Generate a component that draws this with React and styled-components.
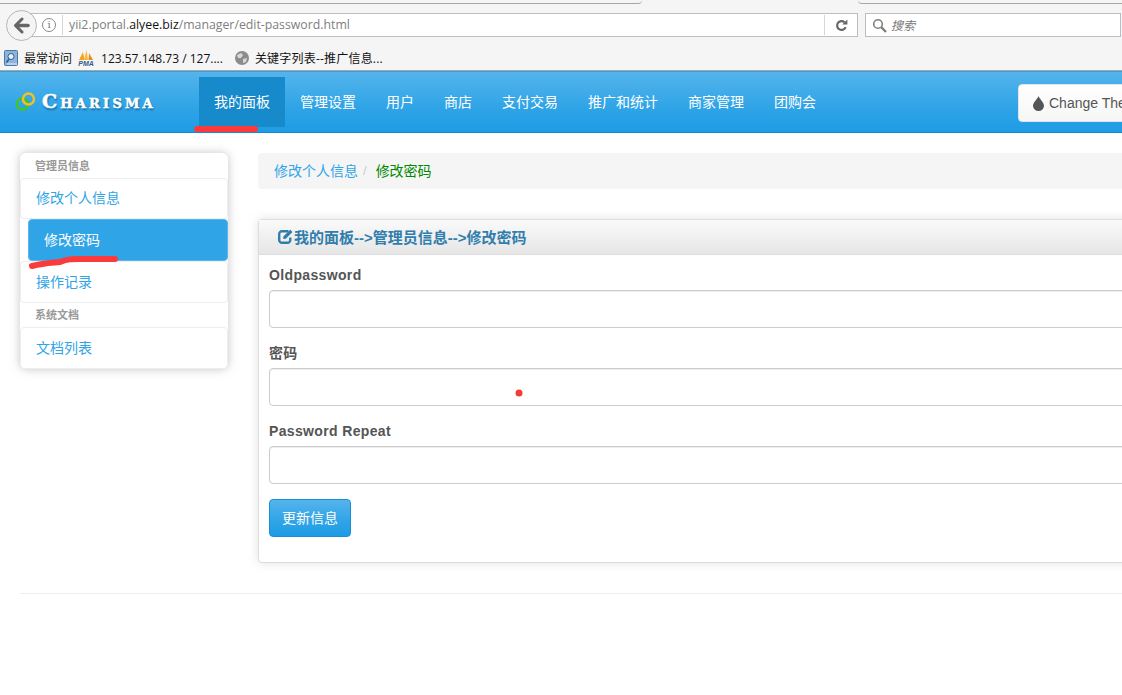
import React from "react";
import styled, { createGlobalStyle } from "styled-components";

const CJK = `"Liberation Sans", "Noto Sans CJK SC", sans-serif`;

const Global = createGlobalStyle`
  html, body { margin: 0; padding: 0; background: #fff; overflow: hidden; }
  body { font-family: ${CJK}; font-size: 14px; color: #555; }
  * { box-sizing: border-box; }
`;

const Screen = styled.div`
  position: relative;
  width: 1122px;
  height: 695px;
  overflow: hidden;
`;
const Page = styled.div`
  width: 1500px;
`;

/* browser chrome */
const Chrome = styled.div`
  height: 71px;
  background: #f5f5f5;
  border-bottom: 1px solid #a8a8a8;
`;
const TabStrip = styled.div`
  height: 9px;
  display: flex;
`;
const TabLine = styled.div`
  height: 4px;
  border-bottom: 1px solid #a4a6a8;
  width: ${p => p.$w}px;
  margin-left: ${p => p.$ml || 0}px;
  border-bottom-left-radius: ${p => p.$bl || 0}px;
  border-bottom-right-radius: ${p => p.$br || 0}px;
`;
const UrlRow = styled.div`
  width: 1122px;
  height: 32px;
  display: flex;
  align-items: center;
  padding-left: 6px;
`;
const BackCircle = styled.div`
  width: 31px;
  height: 31px;
  border-radius: 50%;
  border: 1px solid #b4b6bc;
  background: #f4f4f4;
  display: flex;
  align-items: center;
  justify-content: center;
  position: relative;
  z-index: 1;
  flex: none;
`;
const UrlBar = styled.div`
  width: 830px;
  margin-left: -9px;
  height: 24px;
  background: #fff;
  border: 1px solid #b9bdc6;
  display: flex;
  align-items: center;
  padding-left: 13px;
`;
const InfoMark = styled.span`
  width: 14px;
  height: 14px;
  border: 1px solid #8a8a8a;
  border-radius: 50%;
  color: #777;
  font: 10px/12px "DejaVu Serif", serif;
  text-align: center;
  flex: none;
`;
const Divider = styled.span`
  width: 1px;
  height: 20px;
  background: #d6d6d6;
  flex: none;
  margin: ${p => p.$m};
`;
const UrlText = styled.span`
  font: 12.3px "Open Sans", sans-serif;
  color: #808080;
  white-space: nowrap;
  flex: 1;
  padding: 0 0 2px 1px;
`;
const UrlHost = styled.span`
  color: #111;
`;
const ReloadSlot = styled.span`
  width: 32px;
  display: flex;
  justify-content: center;
  flex: none;
`;
const SearchBar = styled.div`
  width: 256px;
  margin-left: 7px;
  height: 24px;
  background: #fff;
  border: 1px solid #b9bdc6;
  display: flex;
  align-items: center;
  padding-left: 6px;
  gap: 4px;
`;
const SearchHint = styled.span`
  font: italic 12px "Noto Sans CJK SC", sans-serif;
  color: #777;
  padding-bottom: 2px;
`;
const Bookmarks = styled.div`
  display: flex;
  align-items: center;
  height: 20px;
  margin-top: 7px;
  padding-left: 4px;
  font: 12px "Open Sans", "Noto Sans CJK SC", sans-serif;
  color: #111;
  white-space: nowrap;
`;
const Bookmark = styled.span`
  display: flex;
  align-items: center;
  margin-left: ${p => p.$ml || 0}px;
  gap: ${p => p.$gap || 0}px;
  letter-spacing: ${p => p.$ls || 0}px;
`;
const PmaIcon = styled.span`
  width: 16px;
  display: flex;
  flex-direction: column;
  align-items: center;
  line-height: 1;
`;
const PmaLabel = styled.span`
  font: italic bold 7px/7px "Liberation Sans", sans-serif;
  color: #345a8c;
  letter-spacing: 0;
`;

/* site navbar */
const Navbar = styled.div`
  height: 62px;
  background: linear-gradient(#54b4eb, #2fa4e7 60%, #1d9ce5);
  border-bottom: 1px solid #178acc;
  border-top: 1px solid #3d9cd8;
  display: flex;
  align-items: flex-start;
  padding: 5px 0 0 15px;
`;
const Logo = styled.div`
  width: 184px;
  height: 50px;
  display: flex;
  align-items: center;
  gap: 3px;
`;
const LogoText = styled.span`
  font-family: "DejaVu Serif", serif;
  font-weight: bold;
  font-size: 19px;
  font-variant: small-caps;
  letter-spacing: 3.2px;
  color: #fff;
  -webkit-text-stroke: 0.5px #fff;
  text-shadow: 1px 2px 2px rgba(0, 50, 100, 0.6);
  margin-top: -2px;
  white-space: nowrap;
`;
const NavItem = styled.div`
  height: 50px;
  padding: 0 15px;
  line-height: 50px;
  color: #fff;
  font-size: 14px;
  background: ${p => (p.$active ? "#178acc" : "transparent")};
`;
const ThemeButton = styled.div`
  margin: 7px 0 0 187px;
  height: 38px;
  padding: 0 14px;
  display: flex;
  align-items: center;
  gap: 5px;
  border-radius: 4px;
  background: linear-gradient(#fff, #f6f6f6);
  border: 1px solid #e4e4e4;
  color: #555;
  font: 14px "Liberation Sans", sans-serif;
  white-space: nowrap;
`;

/* content */
const Content = styled.div`
  padding: 20px 0 0 20px;
`;
const Columns = styled.div`
  display: grid;
  grid-template-columns: 208px 1fr;
  gap: 30px;
`;
const Sidebar = styled.div`
  height: 216px;
  border-radius: 6px;
  background: #fff;
  box-shadow: 0 0 10px rgba(150, 150, 150, 0.55);
  display: flex;
  flex-direction: column;
`;
const SideHead = styled.div`
  height: ${p => p.$h}px;
  padding-left: 15px;
  font-size: 11px;
  font-weight: bold;
  color: #999;
  line-height: ${p => p.$lh}px;
`;
const SideItem = styled.div`
  height: ${p => p.$h || 42}px;
  padding-left: 15px;
  border: 1px solid #eee;
  border-radius: 4px;
  color: #2fa4e7;
  font-size: 14px;
  line-height: ${p => p.$lh || 40}px;
`;
const SideActive = styled.div`
  height: 42px;
  margin-left: 8px;
  padding-left: 15px;
  border-radius: 4px;
  border: 1px solid #5bb6ec;
  background: #2fa4e7;
  color: #fff;
  font-size: 14px;
  line-height: 40px;
`;
const Main = styled.div`
  display: flex;
  flex-direction: column;
`;
const Crumbs = styled.div`
  height: 36px;
  background: #f5f5f5;
  border-radius: 4px;
  padding: 0 0 2px 16px;
  display: flex;
  align-items: center;
  font-size: 14px;
`;
const CrumbLink = styled.span`
  color: #2fa4e7;
`;
const CrumbSep = styled.span`
  color: #ccc;
  margin: 0 9px 0 5px;
  font-size: 13px;
`;
const CrumbNow = styled.span`
  color: #008a00;
`;
const Box = styled.div`
  margin-top: 30px;
  height: 344px;
  border: 1px solid #ddd;
  border-radius: 4px;
  box-shadow: 0 0 10px rgba(189, 189, 189, 0.45);
  background: #fff;
`;
const BoxHead = styled.div`
  height: 35px;
  padding: 0 0 2px 19px;
  display: flex;
  align-items: center;
  gap: 1px;
  background: linear-gradient(#fafafa, #e6e6e6);
  border-bottom: 1px solid #ddd;
  color: #317eac;
  font-size: 15px;
  font-weight: bold;
`;
const BoxBody = styled.div`
  padding: 10px 10px 0;
`;
const Field = styled.div`
  margin-bottom: 15px;
`;
const Label = styled.label`
  display: block;
  height: 20px;
  line-height: 20px;
  margin-bottom: 5px;
  font-weight: bold;
  color: #555;
  font-size: 14px;
  letter-spacing: 0.35px;
`;
const Input = styled.input`
  display: block;
  width: 100%;
  height: 38px;
  border: 1px solid #ccc;
  border-radius: 4px;
  box-shadow: inset 0 1px 1px rgba(0, 0, 0, 0.075);
  background: #fff;
`;
const Submit = styled.button`
  display: block;
  height: 38px;
  width: 82px;
  padding: 0 0 3px;
  border: 1px solid #1b8ed6;
  border-radius: 4px;
  background: linear-gradient(#54b4eb, #2fa4e7 60%, #1d9ce5);
  color: #fff;
  font: 14px ${CJK};
`;
const Rule = styled.div`
  margin-top: 30px;
  height: 1px;
  background: #eee;
`;

/* hand-drawn annotations lying over the page */
const Scribbles = styled.svg`
  position: absolute;
  left: 0;
  top: 0;
  pointer-events: none;
`;

export default function App() {
  return (
    <Screen>
      <Global />
      <Page>
        <Chrome>
          <TabStrip>
            <TabLine $w={642} $br={6} />
            <TabLine $w={1122 - 858} $ml={216} $bl={6} />
          </TabStrip>
          <UrlRow>
            <BackCircle>
              <svg width="17" height="17" viewBox="0 0 17 17">
                <path d="M9 2 2.5 8.500 9 15" fill="none" stroke="#666" strokeWidth="3" strokeLinejoin="round" strokeLinecap="round" />
                <path d="M4 8.500H15" stroke="#666" strokeWidth="3.600" strokeLinecap="round" />
              </svg>
            </BackCircle>
            <UrlBar>
              <InfoMark>i</InfoMark>
              <Divider $m="0 5px 0 6px" />
              <UrlText>
                yii2.portal.<UrlHost>alyee.biz</UrlHost>/manager/edit-password.html
              </UrlText>
              <Divider $m="0" />
              <ReloadSlot>
                <svg width="13" height="13" viewBox="0 0 13 13">
                  <path d="M10.6 8.2A4.4 4.4 0 1 1 9.5 3.3" fill="none" stroke="#666" strokeWidth="2.2" />
                  <path d="M7.2 5.4H12.4V0.4Z" fill="#666" />
                </svg>
              </ReloadSlot>
            </UrlBar>
            <SearchBar>
              <svg width="15" height="15" viewBox="0 0 15 15">
                <circle cx="6" cy="6" r="4.3" fill="none" stroke="#808080" strokeWidth="1.6" />
                <path d="M9.2 9.2 14 14" stroke="#808080" strokeWidth="2.4" />
              </svg>
              <SearchHint>搜索</SearchHint>
            </SearchBar>
          </UrlRow>
          <Bookmarks>
            <Bookmark $gap={6}>
              <svg width="14" height="16" viewBox="0 0 14 16">
                <rect x="0.5" y="0.5" width="13" height="15" rx="1" fill="#8db4dc" stroke="#4a78a8" />
                <circle cx="7" cy="6.5" r="3" fill="#e6f0fa" stroke="#2f5f90" />
                <path d="M5 9 2.5 12.5" stroke="#2f5f90" strokeWidth="1.6" />
                <path d="M3 14H13" stroke="#e8eef5" />
              </svg>
              最常访问
            </Bookmark>
            <Bookmark $ml={6} $gap={7}>
              <PmaIcon>
                <svg width="16" height="10" viewBox="0 0 16 10">
                  <path d="M1 10 5 2 6.500 10Z" fill="#f4a11c" />
                  <path d="M6 10 8.500 0 10 10Z" fill="#f8b93a" />
                  <path d="M10.500 10 11 3 15 10Z" fill="#e98d12" />
                </svg>
                <PmaLabel>PMA</PmaLabel>
              </PmaIcon>
              123.57.148.73 / 127....
            </Bookmark>
            <Bookmark $ml={12} $gap={6} $ls={0.2}>
              <svg width="14" height="14" viewBox="0 0 14 14">
                <circle cx="7" cy="7" r="7" fill="#8c8c8c" />
                <path d="M2 4 6 2 8 4 6 7 3 7ZM8 8 12 7 11 11 8 12Z" fill="#d8d8d8" />
              </svg>
              关键字列表--推广信息...
            </Bookmark>
          </Bookmarks>
        </Chrome>

        <Navbar>
          <Logo>
            <svg width="24" height="22" viewBox="0 0 24 22">
              <circle cx="7.5" cy="13" r="5.5" fill="none" stroke="#43c61c" strokeWidth="2.4" />
              <circle cx="13.5" cy="8" r="5.5" fill="none" stroke="#f4c21f" strokeWidth="2.4" />
            </svg>
            <LogoText>Charisma</LogoText>
          </Logo>
          <NavItem $active>我的面板</NavItem>
          <NavItem>管理设置</NavItem>
          <NavItem>用户</NavItem>
          <NavItem>商店</NavItem>
          <NavItem>支付交易</NavItem>
          <NavItem>推广和统计</NavItem>
          <NavItem>商家管理</NavItem>
          <NavItem>团购会</NavItem>
          <ThemeButton>
            <svg width="11" height="15" viewBox="0 0 11 15">
              <path d="M5.5 0C6.5 3 11 6.5 11 9.8A5.5 5.2 0 0 1 0 9.8C0 6.5 4.5 3 5.5 0Z" fill="#555" />
            </svg>
            Change Theme
          </ThemeButton>
        </Navbar>

        <Content>
          <Columns>
            <Sidebar>
              <SideHead $h={25} $lh={26}>管理员信息</SideHead>
              <SideItem $h={41} $lh={39}>修改个人信息</SideItem>
              <SideActive>修改密码</SideActive>
              <SideItem $lh={41}>操作记录</SideItem>
              <SideHead $h={24} $lh={25}>系统文档</SideHead>
              <SideItem $lh={41}>文档列表</SideItem>
            </Sidebar>
            <Main>
              <Crumbs>
                <CrumbLink>修改个人信息</CrumbLink>
                <CrumbSep>/</CrumbSep>
                <CrumbNow>修改密码</CrumbNow>
              </Crumbs>
              <Box>
                <BoxHead>
                  <svg width="15" height="15" viewBox="0 0 15 15">
                    <path d="M10.500 2.200H4A2.800 2.800 0 0 0 1.200 5V11A2.800 2.800 0 0 0 4 13.800H9.500A2.800 2.800 0 0 0 12.300 11V8.500" fill="none" stroke="#317eac" strokeWidth="2.400" />
                    <path d="M5.500 7.300 12.200 0.800 14.500 3 7.800 9.700 5.200 10Z" fill="#317eac" />
                  </svg>
                  我的面板--&gt;管理员信息--&gt;修改密码
                </BoxHead>
                <BoxBody>
                  <Field>
                    <Label>Oldpassword</Label>
                    <Input type="password" />
                  </Field>
                  <Field>
                    <Label>密码</Label>
                    <Input type="password" />
                  </Field>
                  <Field>
                    <Label>Password Repeat</Label>
                    <Input type="password" />
                  </Field>
                  <Submit>更新信息</Submit>
                </BoxBody>
              </Box>
            </Main>
          </Columns>
          <Rule />
        </Content>
      </Page>
      <Scribbles width="1122" height="695" viewBox="0 0 1122 695">
        <path d="M197 129H255" stroke="#fb3a3c" strokeWidth="6" strokeLinecap="round" fill="none" />
        <path d="M32 266C44 263 50 263 60 262C68 259 72 259 80 259H115" stroke="#fb3a3c" strokeWidth="6" strokeLinecap="round" fill="none" />
        <circle cx="519" cy="393" r="3.500" fill="#f43b3b" />
      </Scribbles>
    </Screen>
  );
}
